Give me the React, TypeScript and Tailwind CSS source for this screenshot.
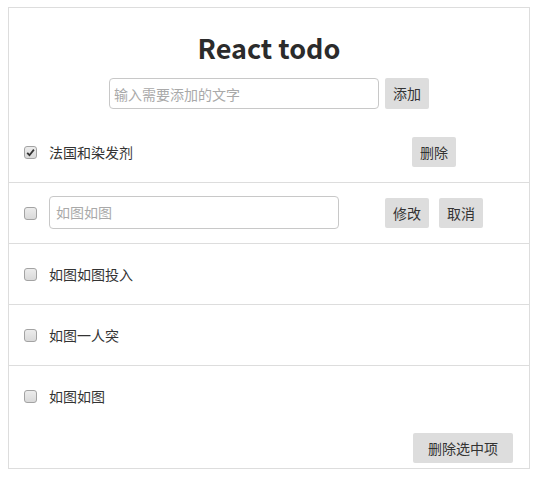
/**
 * React todo 列表
 */

const font = "font-['Microsoft_YaHei','Noto_Sans_CJK_SC',sans-serif]";

function Box({ checked }: { checked?: boolean }) {
  return (
    <span className="flex h-[13px] w-[13px] shrink-0 items-center justify-center rounded-[3px] border border-[#a3a3a3] bg-gradient-to-b from-[#ececec] to-[#d9d9d9]">
      {checked && (
        <svg width="9" height="9" viewBox="0 0 9 9">
          <path d="M1.2 4.8 L3.5 7.2 L7.9 1.6" fill="none" stroke="#333" strokeWidth="1.8" />
        </svg>
      )}
    </span>
  );
}

function Btn({ children, className = "" }: { children: React.ReactNode; className?: string }) {
  return (
    <button className={`h-[30px] rounded-[2px] bg-[#dddddd] px-[8px] text-[14px] text-[#333] ${className}`}>
      {children}
    </button>
  );
}

const rows = ["如图如图投入", "如图一人突", "如图如图"];

export default function App() {
  return (
    <div className={`pl-[8px] pt-[7px] ${font}`}>
      <div className="w-[522px] border border-[#dddddd] bg-white text-[#333]">
        <h1 className="pt-[22px] text-center font-bold text-[27px] leading-[36px] text-[#2b2b2b]">React todo</h1>
        <div className="mt-[12px] flex justify-center gap-[6px]">
          <input
            className="h-[31px] w-[270px] rounded-[4px] border border-[#c8c8c8] px-[4px] text-[14px] outline-none placeholder:text-[#a9a9a9]"
            placeholder="输入需要添加的文字"
          />
          <Btn className="h-[31px]">添加</Btn>
        </div>

        <ul className="mt-[13px]">
          <li className="flex h-[61px] items-center border-b border-[#dddddd] pl-[15px]">
            <Box checked />
            <span className="ml-[12px] w-[336px] text-[14px] leading-[18px]">法国和染发剂</span>
            <Btn className="ml-[27px]">删除</Btn>
          </li>
          <li className="flex h-[61px] items-center border-b border-[#dddddd] pl-[15px]">
            <Box />
            <div className="ml-[12px] w-[336px]">
              <input
                className="mb-[2px] h-[33px] w-[290px] rounded-[4px] border border-[#c8c8c8] px-[6px] text-[14px] outline-none placeholder:text-[#a9a9a9]"
                placeholder="如图如图"
              />
            </div>
            <Btn>修改</Btn>
            <Btn className="ml-[10px]">取消</Btn>
          </li>
          {rows.map((t, i) => (
            <li
              key={i}
              className={`flex h-[61px] items-center pl-[15px] ${i < rows.length - 1 ? "border-b border-[#dddddd]" : ""}`}
            >
              <Box />
              <span className="ml-[12px] text-[14px]">{t}</span>
            </li>
          ))}
        </ul>

        <div className="mt-[6px] flex justify-end pb-[5px] pr-[16px]">
          <Btn className="px-[15px]">删除选中项</Btn>
        </div>
      </div>
    </div>
  );
}
